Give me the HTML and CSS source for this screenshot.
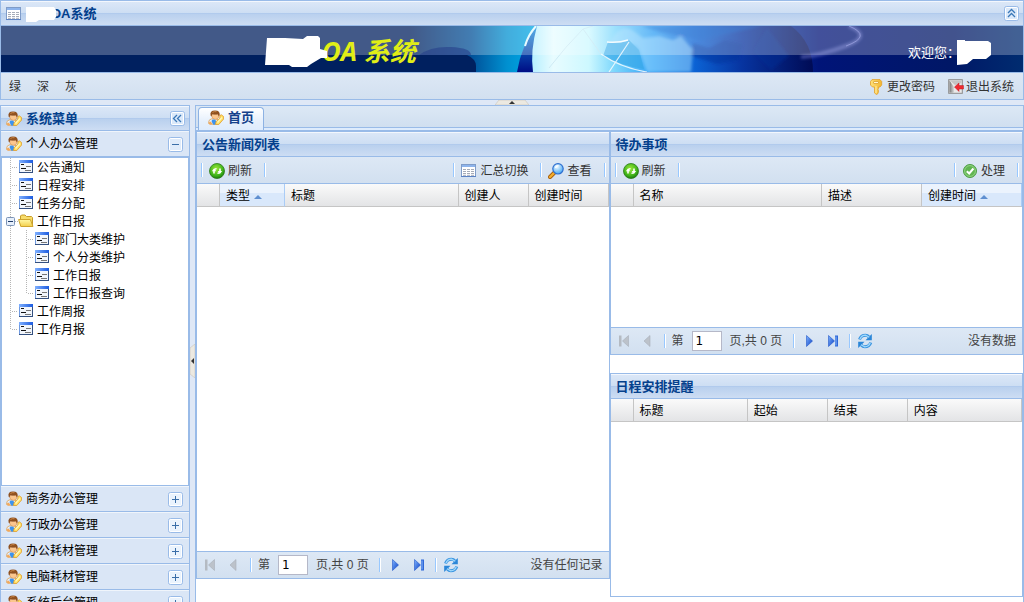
FILE: index.html
```html
<!DOCTYPE html>
<html lang="zh-CN">
<head>
<meta charset="utf-8">
<title>OA系统</title>
<link rel="stylesheet" href="styles.css">
</head>
<body>
<svg class="sprite" aria-hidden="true">
  <defs>
    <linearGradient id="gFolder" x1="0" y1="0" x2="0" y2="1"><stop offset="0" stop-color="#fff9a8"/><stop offset="1" stop-color="#f3cf4c"/></linearGradient>
    <linearGradient id="gForm" x1="0" y1="0" x2="1" y2="0"><stop offset="0" stop-color="#7fb0ff"/><stop offset="1" stop-color="#1c5be0"/></linearGradient>
    <linearGradient id="gArrow" x1="0" y1="0" x2="1" y2="1"><stop offset="0" stop-color="#7fb4ff"/><stop offset="1" stop-color="#0a3fc4"/></linearGradient>
    <radialGradient id="gGreen" cx=".45" cy=".35" r=".65"><stop offset="0" stop-color="#9be838"/><stop offset=".7" stop-color="#3fb41a"/><stop offset="1" stop-color="#1c7d0e"/></radialGradient>
    <radialGradient id="gLens" cx=".4" cy=".3" r=".7"><stop offset="0" stop-color="#f4fcff"/><stop offset="1" stop-color="#45a8f5"/></radialGradient>
    <linearGradient id="gKey" x1="0" y1="0" x2="1" y2="0"><stop offset="0" stop-color="#ffe27a"/><stop offset="1" stop-color="#f2b630"/></linearGradient>
    <linearGradient id="gDoor" x1="0" y1="0" x2="1" y2="0"><stop offset="0" stop-color="#777"/><stop offset="1" stop-color="#d8d8d8"/></linearGradient>
  </defs>
  <symbol id="user" viewBox="0 0 16 16">
    <path d="M.6 13.500L1 10.500Q2.500 8.500 6 8.500L10 9.500V13L6 14.500Z" fill="#e4f0ff" stroke="#e0a04c" stroke-width=".8"/>
    <path d="M4.500 9.500L7 9.500L9.500 13L7 14.800L5 14.500L3.500 11Z" fill="#3b93ee"/>
    <path d="M.8 12.500L2.800 11.500L4.500 14L3 14.800L1.300 14.500Z" fill="#f2a95c"/>
    <path d="M3.500 4.500Q3.800 9.300 7.500 9.300Q11 9 11.300 4.500Z" fill="#fbc68e" stroke="#cf8440" stroke-width=".5"/>
    <path d="M2.600 5.500Q1.500 .5 7 .5Q12.500 .5 11.500 5.500L10.800 6.500L9.800 4.300Q6.500 5 4.500 4L3.300 6.500Z" fill="#8f501e"/>
    <path d="M4.500 2.500Q6 1.200 8.500 1.700" stroke="#c98748" fill="none"/>
    <path d="M7.500 14.500L8 11.800L11.800 8L12 5.500L13.300 4.800L15.600 6.500V9L10.800 14.500Z" fill="#ffe064" stroke="#e09c2c" stroke-width=".8"/>
    <path d="M9.500 12.500L14 7.500" stroke="#fff6b8" stroke-width="1.300"/>
  </symbol>
  <symbol id="grid" viewBox="0 0 16 16">
    <rect x=".5" y="1.500" width="14" height="12" fill="#fff" stroke="#7f9cc8"/>
    <rect x="1" y="2" width="13" height="2" fill="#8db4ec"/>
    <path d="M2 6.500H13M2 8.500H13M2 10.500H13M2 12.300H13" stroke="#a6acb8" stroke-dasharray="3 1"/>
    <path d="M0 13.500H15" stroke="#5b82c4"/>
  </symbol>
  <symbol id="key" viewBox="0 0 16 16">
    <path d="M3 .6H11L12.700 2.500V6L11 8H9.500V9.500L9 10.500L9.500 12L9 14.500L7.500 15.500L5.500 14V8H3.500L1.500 6V2.500Z" fill="url(#gKey)" stroke="#e3a028" stroke-width=".8"/>
    <rect x="4.500" y="2.500" width="5" height="2" rx=".5" fill="#fff8d8" stroke="#d99a20" stroke-width=".7"/>
    <path d="M7 7V14" stroke="#fff0a8"/>
  </symbol>
  <symbol id="exit" viewBox="0 0 16 16">
    <rect x=".7" y=".7" width="13.600" height="13.600" fill="#e9e9e9" stroke="#8b8b8b"/>
    <path d="M1.500 1.500L6 8V14L1.500 13.500Z" fill="url(#gDoor)"/>
    <path d="M2 1.500H13.500V4L7 6Z" fill="#c4c4c4"/>
    <path d="M6.500 8L11 4V6.500H15.500V10H11V12.500Z" fill="#ee2a30" stroke="#bd1820" stroke-width=".5"/>
  </symbol>
  <symbol id="reload" viewBox="0 0 16 16">
    <circle cx="8" cy="8" r="7.500" fill="url(#gGreen)" stroke="#2b7a18" stroke-width=".8"/>
    <path d="M5 10.500V7.500Q5.200 5.500 7.500 5.700" fill="none" stroke="#fff" stroke-width="1.600"/>
    <path d="M2.800 8.200L5 5.400L7.400 8.200Z" fill="#fff"/>
    <path d="M11 5.500V8.500Q10.800 10.500 8.500 10.300" fill="none" stroke="#fff" stroke-width="1.600"/>
    <path d="M8.600 7.900L11 10.800L13.200 7.900Z" fill="#fff"/>
  </symbol>
  <symbol id="find" viewBox="0 0 16 16">
    <path d="M2 14L6.500 9.500" stroke="#a35c0c" stroke-width="4" stroke-linecap="round"/>
    <path d="M2 14L6 10" stroke="#f4ae2c" stroke-width="2.400" stroke-linecap="round"/>
    <circle cx="10" cy="5.800" r="5.200" fill="url(#gLens)" stroke="#2f6fd0" stroke-width="1.200"/>
    <path d="M7.500 5Q8 2.800 10.500 2.600" stroke="#fff" stroke-width="1.400" fill="none"/>
  </symbol>
  <symbol id="ok" viewBox="0 0 16 16">
    <circle cx="8" cy="8" r="6.500" fill="#61b552" stroke="#4e9e46"/>
    <circle cx="8" cy="8" r="5.400" fill="none" stroke="#9dda8e" stroke-width=".8"/>
    <path d="M4.800 8.200L7.200 10.500L11.400 5.500" stroke="#fff" stroke-width="2" fill="none"/>
  </symbol>
  <symbol id="form" viewBox="0 0 16 16">
    <rect x="1.500" y="1.500" width="13" height="12" fill="#f2f6fc" stroke="#6f9ae0"/>
    <rect x="1" y="1" width="14" height="3" fill="url(#gForm)"/>
    <path d="M14.500 4V14M1 13.500H15" stroke="#34507f"/>
    <path d="M3 5.500H6M3 9.500H8" stroke="#111"/>
    <path d="M8 7.500H13M7 11.500H13" stroke="#777"/>
  </symbol>
  <symbol id="folder" viewBox="0 0 16 16">
    <path d="M2.500 12.500V3L3.500 2H7L8.500 3.500H13.500L14.500 4.500V12.500Z" fill="#f7dc6a" stroke="#c79c2a"/>
    <path d="M2.800 13.500L.6 6.500H12.300L15 13.500Z" fill="url(#gFolder)" stroke="#d0a52e"/>
  </symbol>
  <symbol id="elbow" viewBox="0 0 16 18"><path d="M8.500 0V18M10 9.500H16" stroke="#b5b5b5" stroke-dasharray="1 1" fill="none"/></symbol>
  <symbol id="elbow-end" viewBox="0 0 16 18"><path d="M8.500 0V10M10 9.500H16" stroke="#b5b5b5" stroke-dasharray="1 1" fill="none"/></symbol>
  <symbol id="elbow-line" viewBox="0 0 16 18"><path d="M8.500 0V18" stroke="#b5b5b5" stroke-dasharray="1 1" fill="none"/></symbol>
  <symbol id="elbow-minus" viewBox="0 0 16 18">
    <path d="M8.500 0V18M13 9.500H16" stroke="#b5b5b5" stroke-dasharray="1 1" fill="none"/>
    <rect x="4.500" y="5.500" width="8" height="8" rx="1" fill="#e6effb" stroke="#7b93b6"/>
    <path d="M6 9.500H11" stroke="#1f3a68"/>
  </symbol>
  <symbol id="first" viewBox="0 0 16 16"><rect x="3" y="2.500" width="2.500" height="11" fill="#b4bac2"/><path d="M12.500 2.500V13.500L6.500 8Z" fill="#bcc2ca" stroke="#a7aeb8" stroke-width=".6"/></symbol>
  <symbol id="prev" viewBox="0 0 16 16"><path d="M10 2.500V13.500L4 8Z" fill="#bcc2ca" stroke="#a7aeb8" stroke-width=".6"/></symbol>
  <symbol id="next" viewBox="0 0 16 16"><path d="M5.500 2.500V13.500L11.500 8Z" fill="url(#gArrow)" stroke="#2156c8" stroke-width=".6"/></symbol>
  <symbol id="last" viewBox="0 0 16 16"><path d="M3.500 2.500V13.500L9.500 8Z" fill="url(#gArrow)" stroke="#2156c8" stroke-width=".6"/><path d="M10 2.500H13V13.500H10Z" fill="#2e68d8"/><path d="M11 3.500V12.500" stroke="#8db8fa"/></symbol>
  <symbol id="sync" viewBox="0 0 16 16">
    <path d="M2.500 6.500Q4 2.200 8.500 2.200Q10.500 2.200 12 4" fill="none" stroke="#3a94e0" stroke-width="3"/>
    <path d="M14.800 1V7.300H8.500Z" fill="#2a86d8"/>
    <path d="M2.900 6.200Q4.500 2.200 8.500 2.200L12.300 4.300" fill="none" stroke="#a2dafc" stroke-width="1.200"/>
    <path d="M13.800 9.500Q12.300 13.800 7.800 13.800Q5.800 13.800 4.200 12" fill="none" stroke="#3a94e0" stroke-width="3"/>
    <path d="M1.200 15V8.800H7.500Z" fill="#2a86d8"/>
    <path d="M13.300 9.800Q11.800 13.800 7.800 13.800L4 11.700" fill="none" stroke="#a2dafc" stroke-width="1.200"/>
  </symbol>
  <symbol id="t-plus" viewBox="0 0 15 15"><rect x=".5" y=".5" width="14" height="14" rx="2" fill="#eaf3fd" stroke="#99bbe8"/><rect x="1.500" y="1.500" width="12" height="12" rx="1" fill="none" stroke="#fff"/><path d="M4 7.500H11M7.500 4V11" stroke="#3a6ea8"/></symbol>
  <symbol id="t-minus" viewBox="0 0 15 15"><rect x=".5" y=".5" width="14" height="14" rx="2" fill="#dfebfa" stroke="#99bbe8"/><rect x="1.500" y="1.500" width="12" height="12" rx="1" fill="none" stroke="#fff"/><path d="M4 7.500H11" stroke="#3a6ea8"/></symbol>
  <symbol id="t-left" viewBox="0 0 15 15"><rect x=".5" y=".5" width="14" height="14" rx="2" fill="#dbe9fa" stroke="#99bbe8"/><rect x="1.500" y="1.500" width="12" height="12" rx="1" fill="none" stroke="#fff"/><path d="M7 4L3.500 7.500L7 11M11 4L7.500 7.500L11 11" stroke="#3a78b8" stroke-width="1.300" fill="none"/></symbol>
  <symbol id="t-up" viewBox="0 0 15 15"><rect x=".5" y=".5" width="14" height="14" rx="2" fill="#dbe9fa" stroke="#99bbe8"/><rect x="1.500" y="1.500" width="12" height="12" rx="1" fill="none" stroke="#fff"/><path d="M4 7L7.500 3.500L11 7M4 11L7.500 7.500L11 11" stroke="#3a78b8" stroke-width="1.300" fill="none"/></symbol>
</svg>

<div class="page">
  <header class="top">
    <div class="title-bar">
      <svg class="icon"><use href="#grid"/></svg>
      <h1 class="title"><svg class="name-mask" viewBox="0 0 30 15"><path d="M0 0H28L30 3V10L28 13H13L10 15H0Z" fill="#fff"/></svg><span>OA系统</span></h1>
      <button class="tool" aria-label="收起"><svg><use href="#t-up"/></svg></button>
    </div>
    <div class="banner">
      <svg class="banner-art" viewBox="0 0 1022 46" preserveAspectRatio="none" aria-hidden="true">
        <defs>
          <linearGradient id="sky" x1="0" y1="0" x2="1" y2="0">
            <stop offset="0" stop-color="#00205f"/><stop offset=".4" stop-color="#00205f"/><stop offset=".46" stop-color="#005098"/><stop offset=".495" stop-color="#0090d0"/><stop offset=".52" stop-color="#00a6e4"/><stop offset=".68" stop-color="#0b7fdc"/><stop offset=".74" stop-color="#0a3ea8"/><stop offset=".8" stop-color="#001478"/><stop offset=".93" stop-color="#001766"/><stop offset="1" stop-color="#002c70"/>
          </linearGradient>
          <linearGradient id="globe" x1="0" y1="0" x2="1" y2="0">
            <stop offset="0" stop-color="#0c8fdf"/><stop offset=".05" stop-color="#b8f0ff"/><stop offset=".12" stop-color="#e8fcff"/><stop offset=".24" stop-color="#cdf8ff"/><stop offset=".33" stop-color="#7ad6fc"/><stop offset=".46" stop-color="#2f9ff4"/><stop offset=".6" stop-color="#0b62d4"/><stop offset=".76" stop-color="#0734a0"/><stop offset="1" stop-color="#000b55"/>
          </linearGradient>
          <linearGradient id="shade" x1="0" y1="0" x2="0" y2="1"><stop offset="0" stop-color="#1590e0"/><stop offset="1" stop-color="#000d84"/></linearGradient>
          <filter id="soft" x="-10%" y="-10%" width="120%" height="120%"><feGaussianBlur stdDeviation="1.500"/></filter>
        </defs>
        <rect width="1022" height="46" fill="url(#sky)"/>
        <path d="M250 29H466Q475 33 475 40V46H250Z" fill="#00205f"/>
        <path d="M536 0Q520 20 517 46H812Q812 16 790 0Z" fill="url(#globe)"/>
        <path d="M536 0Q520 20 516 46H532Q529 25 536 0Z" fill="url(#shade)"/>
        <path d="M535 0Q527 9 524 20" stroke="#dffaff" stroke-width="2" fill="none"/>
        <g filter="url(#soft)">
          <path d="M614 8Q623 -1 631 4L642 12L658 10L672 14L680 10L692 24L690 46H646L638 24Q634 16 624 18L609 16Z" fill="#9fdcff" opacity=".5"/>
          <path d="M640 0H700L760 0L700 14L680 10L660 6Z" fill="#0d56c8" opacity=".45"/>
          <path d="M692 17L708 22L724 14L742 18L738 34L716 38L690 30ZM752 26L766 2L788 30L770 44Z" fill="#062c96" opacity=".45"/>
        </g>
        <path d="M607 16Q620 18 628 14L638 24L643 43Q620 40 602 30Z" fill="#38a8e8" opacity=".7"/>
        <path d="M606 16Q618 17 627 14" stroke="#fff" stroke-width="1.500" fill="none" opacity=".9"/>
        <path d="M600 28Q620 42 646 46M608 46L628 16" stroke="#fff" stroke-width="1.200" fill="none" opacity=".8"/>
        <path d="M582 3L600 28M582 3Q565 20 548 42M582 3L592 0" stroke="#c4e2f0" fill="none" opacity=".7"/>
        <path d="M848 0Q872 10 845 20T800 31" stroke="#8088e0" stroke-width="4" fill="none" opacity=".45" filter="url(#soft)"/>
        <path d="M848 0Q872 10 845 20" stroke="#8c94e8" fill="none" opacity=".6"/>
        <rect width="1022" height="29" fill="#fff" opacity=".26"/>
        <path d="M418 29Q430 20 450 21T470 29Z" fill="#27408a" opacity=".6"/>
      </svg>
      <h2 class="brand"><svg class="brand-mask" viewBox="0 0 62 31"><path d="M2 2H20L38 3L42 0H53L55 2V13L62 15V22H56L46 28L42 31H27L24 29L0 29Z" fill="#fff"/></svg><span>OA 系统</span></h2>
      <p class="welcome"><span>欢迎您：</span><svg class="user-mask" viewBox="0 0 34 25"><path d="M0 0H8V1H31L34 3V15L29 19H16L10 24L0 25Z" fill="#fff"/></svg></p>
    </div>
    <div class="top-tools">
      <nav class="themes"><button>绿</button><button>深</button><button>灰</button></nav>
      <div class="account">
        <button><svg class="icon"><use href="#key"/></svg>更改密码</button>
        <button><svg class="icon"><use href="#exit"/></svg>退出系统</button>
      </div>
    </div>
  </header>
  <div class="split-h"><svg viewBox="0 0 34 5"><path d="M4 0H30L34 5H0Z" fill="#ece9e1" stroke="#c9c5ba" stroke-width=".6"/><path d="M17 1L20 4H14Z" fill="#333"/></svg></div>

  <div class="work">
    <aside class="sidebar">
      <div class="title-bar">
        <svg class="icon"><use href="#user"/></svg>
        <h2 class="title">系统菜单</h2>
        <button class="tool" aria-label="折叠"><svg><use href="#t-left"/></svg></button>
      </div>
      <section class="open">
        <h3 class="acc"><svg class="icon"><use href="#user"/></svg><span>个人办公管理</span><button class="tool" aria-label="收起"><svg><use href="#t-minus"/></svg></button></h3>
        <ul class="tree">
          <li><a href="#n1"><svg class="elbow"><use href="#elbow"/></svg><svg class="icon"><use href="#form"/></svg><span>公告通知</span></a></li>
          <li><a href="#n2"><svg class="elbow"><use href="#elbow"/></svg><svg class="icon"><use href="#form"/></svg><span>日程安排</span></a></li>
          <li><a href="#n3"><svg class="elbow"><use href="#elbow"/></svg><svg class="icon"><use href="#form"/></svg><span>任务分配</span></a></li>
          <li><a href="#n4"><svg class="elbow"><use href="#elbow-minus"/></svg><svg class="icon"><use href="#folder"/></svg><span>工作日报</span></a>
            <ul>
              <li><a href="#n5"><svg class="elbow"><use href="#elbow-line"/></svg><svg class="elbow"><use href="#elbow"/></svg><svg class="icon"><use href="#form"/></svg><span>部门大类维护</span></a></li>
              <li><a href="#n6"><svg class="elbow"><use href="#elbow-line"/></svg><svg class="elbow"><use href="#elbow"/></svg><svg class="icon"><use href="#form"/></svg><span>个人分类维护</span></a></li>
              <li><a href="#n7"><svg class="elbow"><use href="#elbow-line"/></svg><svg class="elbow"><use href="#elbow"/></svg><svg class="icon"><use href="#form"/></svg><span>工作日报</span></a></li>
              <li><a href="#n8"><svg class="elbow"><use href="#elbow-line"/></svg><svg class="elbow"><use href="#elbow-end"/></svg><svg class="icon"><use href="#form"/></svg><span>工作日报查询</span></a></li>
            </ul>
          </li>
          <li><a href="#n9"><svg class="elbow"><use href="#elbow"/></svg><svg class="icon"><use href="#form"/></svg><span>工作周报</span></a></li>
          <li><a href="#n10"><svg class="elbow"><use href="#elbow-end"/></svg><svg class="icon"><use href="#form"/></svg><span>工作月报</span></a></li>
        </ul>
      </section>
      <h3 class="acc"><svg class="icon"><use href="#user"/></svg><span>商务办公管理</span><button class="tool" aria-label="展开"><svg><use href="#t-plus"/></svg></button></h3>
      <h3 class="acc"><svg class="icon"><use href="#user"/></svg><span>行政办公管理</span><button class="tool" aria-label="展开"><svg><use href="#t-plus"/></svg></button></h3>
      <h3 class="acc"><svg class="icon"><use href="#user"/></svg><span>办公耗材管理</span><button class="tool" aria-label="展开"><svg><use href="#t-plus"/></svg></button></h3>
      <h3 class="acc"><svg class="icon"><use href="#user"/></svg><span>电脑耗材管理</span><button class="tool" aria-label="展开"><svg><use href="#t-plus"/></svg></button></h3>
      <h3 class="acc"><svg class="icon"><use href="#user"/></svg><span>系统后台管理</span><button class="tool" aria-label="展开"><svg><use href="#t-plus"/></svg></button></h3>
    </aside>
    <div class="split-v"><svg viewBox="0 0 5 34"><path d="M5 0V34L0 30V4Z" fill="#ece9e1" stroke="#c9c5ba" stroke-width=".6"/><path d="M1 17L4 14V20Z" fill="#333"/></svg></div>

    <main class="main">
      <div class="tabs"><button class="tab"><svg class="icon"><use href="#user"/></svg>首页</button></div>
      <div class="portal">
        <section class="panel">
          <div class="title-bar"><h2 class="title">公告新闻列表</h2></div>
          <div class="toolbar">
            <i class="sep"></i><button><svg class="icon"><use href="#reload"/></svg>刷新</button><i class="sep"></i>
            <span class="fill"></span>
            <i class="sep"></i><button><svg class="icon"><use href="#grid"/></svg>汇总切换</button><i class="sep"></i><button><svg class="icon"><use href="#find"/></svg>查看</button><i class="sep"></i>
          </div>
          <table class="grid">
            <colgroup><col class="w-num"><col class="w-type"><col><col class="w-by"><col class="w-short"></colgroup>
            <thead><tr><th></th><th class="sorted">类型</th><th>标题</th><th>创建人</th><th>创建时间</th></tr></thead>
          </table>
          <div class="rows news-rows"></div>
          <div class="paging">
            <button aria-label="首页" disabled><svg class="icon"><use href="#first"/></svg></button><button aria-label="上一页" disabled><svg class="icon"><use href="#prev"/></svg></button><i class="sep"></i>
            <label for="p1">第</label><input id="p1" type="text" value="1"><span class="count">页,共 0 页</span><i class="sep"></i>
            <button aria-label="下一页"><svg class="icon"><use href="#next"/></svg></button><button aria-label="末页"><svg class="icon"><use href="#last"/></svg></button><i class="sep"></i><button aria-label="刷新"><svg class="icon"><use href="#sync"/></svg></button>
            <span class="msg">没有任何记录</span>
          </div>
        </section>
        <div class="column">
          <section class="panel">
            <div class="title-bar"><h2 class="title">待办事项</h2></div>
            <div class="toolbar">
              <i class="sep"></i><button><svg class="icon"><use href="#reload"/></svg>刷新</button><i class="sep"></i>
              <span class="fill"></span>
              <i class="sep"></i><button><svg class="icon"><use href="#ok"/></svg>处理</button><i class="sep"></i>
            </div>
            <table class="grid">
              <colgroup><col class="w-num"><col><col class="w-mid"><col class="w-mid"></colgroup>
              <thead><tr><th></th><th>名称</th><th>描述</th><th class="sorted">创建时间</th></tr></thead>
            </table>
            <div class="rows todo-rows"></div>
            <div class="paging">
              <button aria-label="首页" disabled><svg class="icon"><use href="#first"/></svg></button><button aria-label="上一页" disabled><svg class="icon"><use href="#prev"/></svg></button><i class="sep"></i>
              <label for="p2">第</label><input id="p2" type="text" value="1"><span class="count">页,共 0 页</span><i class="sep"></i>
              <button aria-label="下一页"><svg class="icon"><use href="#next"/></svg></button><button aria-label="末页"><svg class="icon"><use href="#last"/></svg></button><i class="sep"></i><button aria-label="刷新"><svg class="icon"><use href="#sync"/></svg></button>
              <span class="msg">没有数据</span>
            </div>
          </section>
          <section class="panel">
            <div class="title-bar"><h2 class="title">日程安排提醒</h2></div>
            <table class="grid">
              <colgroup><col class="w-num"><col><col class="w-short"><col class="w-short"><col></colgroup>
              <thead><tr><th></th><th>标题</th><th>起始</th><th>结束</th><th>内容</th></tr></thead>
            </table>
            <div class="rows plan-rows"></div>
          </section>
        </div>
      </div>
    </main>
  </div>
</div>
</body>
</html>
```

FILE: styles.css
```css
* { box-sizing: border-box; margin: 0; padding: 0; }
html { overflow: hidden; }
body {
  overflow: hidden;
  background: #dfe8f6;
  font: 12px/16px "Liberation Sans", "Noto Sans CJK SC", sans-serif;
  color: #000;
}
button {
  display: flex; align-items: center; gap: 3px;
  border: 0; background: none; color: #333; font: inherit; white-space: nowrap;
}
svg { display: block; flex: none; }
.sprite { position: absolute; width: 0; height: 0; }
.icon { width: 16px; height: 16px; }
.page { display: flex; flex-direction: column; min-height: 100vh; }

/* shared title bar */
.title-bar {
  display: flex; align-items: center; gap: 4px;
  height: 25px; padding: 0 4px 0 5px;
  border-top: 1px solid #f3f7fd;
  border-bottom: 1px solid #99bbe8;
  background: linear-gradient(#dbe7f7 0, #cddef3 11px, #a9c5ec 11px, #b9d0ee 12px, #cdddf3 100%);
}
.title { flex: 1; display: flex; font-size: 13px; line-height: 18px; font-weight: bold; color: #04408c; }
.tool svg { width: 15px; height: 15px; }

/* header */
.top { border: 1px solid #99bbe8; }
.name-mask { width: 30px; height: 15px; margin: 2px -5px 0 0; z-index: 1; }
.banner { position: relative; height: 46px; display: flex; align-items: center; }
.banner-art { position: absolute; inset: 0; width: 100%; height: 100%; }
.brand {
  position: relative; display: flex; align-items: center; flex: 1; padding: 4px 0 0 26%;
  font: italic bold 26px/34px "Open Sans", "Noto Sans CJK SC", sans-serif; color: #e1ee16;
}
.brand-mask { width: 62px; height: 31px; margin: 0 -5px 0 -2px; z-index: 1; }
.welcome {
  position: relative; display: flex; align-items: center; padding: 6px 32px 0 0;
  font: 13px/16px "Noto Sans CJK SC", sans-serif; color: #fff;
}
.user-mask { width: 34px; height: 25px; margin-left: -3px; }
.top-tools {
  display: flex; justify-content: space-between; height: 27px; padding: 1px 9px 0 8px;
  border-top: 1px solid #99bbe8; background: linear-gradient(#dde8f5, #d2e0f0);
}
.themes, .account { display: flex; }
.themes { gap: 16px; }
.account { gap: 13px; }
.account button { gap: 2px; }

/* splitters */
.split-h { height: 5px; display: flex; justify-content: center; }
.split-h svg { width: 34px; height: 5px; }
.split-v { width: 5px; display: flex; align-items: center; }
.split-v svg { width: 5px; height: 34px; }
.work { display: flex; flex: 1; }

/* sidebar */
.sidebar { width: 190px; flex: none; border: 1px solid #99bbe8; background: #dae6f6; }
.acc {
  display: flex; align-items: center; gap: 4px; height: 26px; padding: 0 6px 0 5px;
  border-top: 1px solid #f0f5fb; border-bottom: 1px solid #99bbe8;
  font-size: 12px; font-weight: normal;
}
.acc span { flex: 1; }
.tree { min-height: 329px; border: 1px solid #99bbe8; background: #fff; list-style: none; }
.tree ul { list-style: none; }
.tree a { display: flex; align-items: center; height: 18px; color: #000; text-decoration: none; }
.tree span { padding: 2px 0 0 3px; }
.elbow { width: 16px; height: 18px; }

/* main area */
.main { flex: 1; display: flex; flex-direction: column; border: 1px solid #99bbe8; background: #fff; }
.tabs { display: flex; align-items: flex-end; height: 24px; padding: 0 2px; background: linear-gradient(#dce8f5 0, #d0dff0 21px, #99bbe8 21px, #99bbe8 22px, #deecfd 22px); }
.tab {
  height: 23px; padding: 0 9px 2px; gap: 4px; border: 1px solid #8db2e3; border-bottom: 0; border-radius: 4px 4px 0 0;
  background: linear-gradient(#fff, #e6f0fc 60%, #deecfd); color: #15428b; font-size: 13px; font-weight: bold;
}
.portal { display: grid; grid-template-columns: 1fr 1fr; align-items: start; border-top: 1px solid #99bbe8; }
.column { display: grid; gap: 18px; }
.panel { border: 1px solid #99bbe8; min-width: 0; }
.toolbar {
  display: flex; align-items: center; gap: 8px; height: 27px; padding: 0 5px 0 4px;
  border-bottom: 1px solid #99bbe8; background: linear-gradient(#dde8f5, #d2e0f0);
}
.sep { width: 2px; height: 14px; border-left: 1px solid #98c8ff; border-right: 1px solid #fff; margin-right: -2px; }
.toolbar button { padding: 1px 4px 0 0; }
.fill { flex: 1; }
.grid { width: 100%; table-layout: fixed; border-collapse: separate; border-spacing: 0; }
.grid th {
  height: 23px; padding: 2px 6px 0; text-align: left; font-weight: normal; white-space: nowrap;
  border-right: 1px solid #c5c5c5; border-bottom: 1px solid #c5c5c5; background: linear-gradient(#fafafa, #e3e4e6);
}
.grid .sorted { background: linear-gradient(#ebf3fd 0, #ebf3fd 9px, #d9e8fb 9px); border-right-color: #aaccf6; }
.sorted::after {
  content: ""; display: inline-block; margin-left: 4px; vertical-align: 1px;
  border: 4px solid transparent; border-top: 0; border-bottom-color: #5f8fd0;
}
.w-num { width: 23px; }
.w-type { width: 65px; }
.w-by { width: 70px; }
.w-short { width: 80px; }
.w-mid { width: 100px; }
.news-rows { min-height: 344px; }
.todo-rows { min-height: 120px; }
.plan-rows { min-height: 174px; }
.paging {
  display: flex; align-items: center; gap: 8px; height: 27px; padding: 0 6px 0 5px; color: #444;
  border-top: 1px solid #99bbe8; background: linear-gradient(#dde8f5, #d2e0f0);
}
.paging input { width: 30px; height: 20px; padding: 0 3px; border: 1px solid #b5b8c8; background: #fff; font: 12px/16px "DejaVu Sans", sans-serif; }
.count { min-width: 55px; }
.msg { margin-left: auto; }
```
